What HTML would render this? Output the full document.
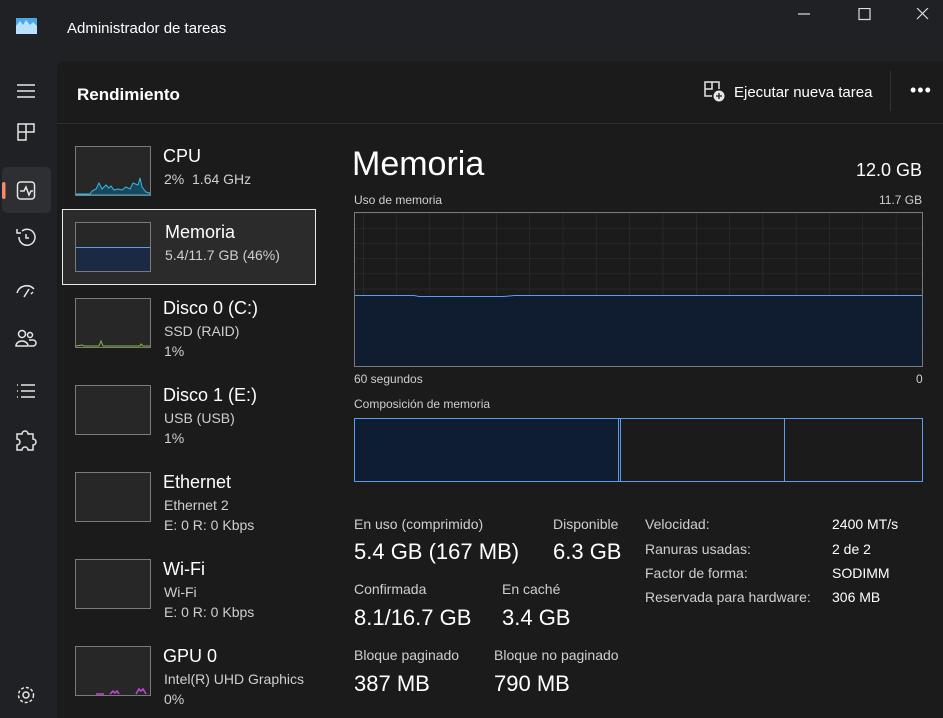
<!DOCTYPE html>
<html><head><meta charset="utf-8"><style>
*{margin:0;padding:0;box-sizing:border-box}
body{width:943px;height:718px;background:#1f2125;font-family:"Segoe UI","Liberation Sans",sans-serif;color:#fff;position:relative;overflow:hidden}
.a{position:absolute}
.t{white-space:nowrap}
.content{left:57px;top:61px;width:886px;height:657px;background:#1b1b1b;border-top-left-radius:8px}
.thumb{position:absolute;left:75px;width:76px;height:50px;background:#272727;border:1px solid #7a7a7a}
.nt{position:absolute;left:163px;font-size:18px;color:#fff}
.ns{position:absolute;left:164px;font-size:14px;color:#cfcfcf}
.lbl{font-size:14px;color:#cfcfcf;position:absolute;white-space:nowrap}
.val{font-size:22px;color:#fff;position:absolute;white-space:nowrap}
.ic{stroke:#e6e6e6;fill:none;stroke-width:1.5}
</style></head><body>
<svg class="a" style="left:16px;top:18px" width="21" height="16"><rect width="21" height="16" fill="#4aa8e8"/><path d="M0 8 L4 3 L7 7 L10 2 L14 7 L17 4 L21 8 V16 H0Z" fill="#b8e2fb"/></svg>
<div class="a t" style="left:67px;top:20px;font-size:15px;color:#fff">Administrador de tareas</div>
<svg class="a" style="left:790px;top:8px" width="150" height="20"><path d="M8 6H20" stroke="#ddd" stroke-width="1.2"/><rect x="69" y="0.5" width="11" height="11" stroke="#ddd" fill="none" stroke-width="1.2"/><path d="M127 0 L138 11 M138 0 L127 11" stroke="#ddd" stroke-width="1.2"/></svg>

<svg class="a" style="left:0;top:75px" width="57" height="640">
<path class="ic" d="M17 10H35M17 16H35M17 22H35"/>
<path class="ic" d="M18 57h8v-8h-8zM26 57h8v-8h-8zM18 57v8h8v-8"/>
<rect x="2" y="92" width="49" height="46" rx="5" fill="#2d2f33"/>
<rect x="2" y="107" width="3.5" height="17" rx="2" fill="#f28c6c"/>
<rect x="17.5" y="107" width="17" height="17" rx="3" class="ic"/>
<path class="ic" d="M20 116h4l2-4 3 8 2-4h2"/>
<path class="ic" d="M19 162a8 8 0 1 0 3-6M17 154v4h4M26 159v4h3"/>
<path class="ic" d="M17 218a10 10 0 0 1 17-4M24 222l5-8M31 219l2-2"/>
<circle class="ic" cx="22" cy="259" r="3.5"/><circle class="ic" cx="30" cy="260" r="2.5"/><path class="ic" d="M16 271a6 5 0 0 1 12 0zM29 265h4a3 3 0 0 1 0 6h-4"/>
<path class="ic" d="M21 310h14M21 316h14M21 322h14M17 310h1M17 316h1M17 322h1"/>
<path class="ic" d="M22 359a3 3 0 0 1 6 0h5v5a3 3 0 0 1 0 6v5h-5a3 3 0 0 0-6 0h-5v-5a3 3 0 0 0 0-6v-5z"/>
<circle class="ic" cx="26" cy="620" r="3"/><circle class="ic" cx="26" cy="620" r="7.5" stroke-dasharray="3 2"/>
</svg>

<div class="a content"></div>
<div class="a t" style="left:77px;top:85px;font-size:17px;font-weight:bold">Rendimiento</div>
<div class="a" style="left:57px;top:123px;width:886px;height:1px;background:#2e2e2e"></div>
<svg class="a" style="left:704px;top:81px" width="22" height="22"><path class="ic" d="M1 1h7v7H1zM8 1h7v7M1 8v7h7" stroke-width="1.3"/><circle cx="15" cy="15" r="5.5" fill="#e6e6e6"/><path d="M15 12v6M12 15h6" stroke="#1b1b1b" stroke-width="1.3"/></svg>
<div class="a t" style="left:734px;top:84px;font-size:15px">Ejecutar nueva tarea</div>
<div class="a" style="left:890px;top:71px;width:1px;height:40px;background:#333"></div>
<div class="a t" style="left:910px;top:80px;font-size:18px;letter-spacing:1px">•••</div>

<div class="a" style="left:62px;top:209px;width:254px;height:76px;background:#2b2b2b;border:1px solid #e8e8e8"></div>
<div class="thumb" style="top:146px"><svg width="74" height="48" style="position:absolute;left:0;top:0"><path d="M0 47 L14 47 L16 44 L20 42 L23 36 L26 42 L30 38 L33 41 L35 39 L38 43 L42 42 L46 43 L50 40 L54 42 L57 36 L62 38 L64 31 L66 40 L70 45 L74 46 V48 H0Z" fill="#16495e" stroke="#3ab7e0" stroke-width="1"/></svg></div>
<div class="nt" style="top:146px">CPU</div><div class="ns" style="top:171px">2%&nbsp; 1.64 GHz</div>
<div class="thumb" style="top:222px"><div style="position:absolute;left:0;right:0;bottom:0;height:24px;background:#1b2a44;border-top:1px solid #5d9ded"></div></div>
<div class="nt" style="top:222px;left:165px">Memoria</div><div class="ns" style="top:247px;left:165px">5.4/11.7 GB (46%)</div>
<div class="thumb" style="top:298px"><svg width="74" height="48" style="position:absolute"><path d="M0 47L6 46L8 47L23 47L25 42L27 47L64 47L65 45L67 47L74 47" stroke="#7fbf3a" fill="none"/></svg></div>
<div class="nt" style="top:298px">Disco 0 (C:)</div><div class="ns" style="top:323px">SSD (RAID)</div><div class="ns" style="top:343px">1%</div>
<div class="thumb" style="top:385px"></div>
<div class="nt" style="top:385px">Disco 1 (E:)</div><div class="ns" style="top:410px">USB (USB)</div><div class="ns" style="top:430px">1%</div>
<div class="thumb" style="top:472px"></div>
<div class="nt" style="top:472px">Ethernet</div><div class="ns" style="top:497px">Ethernet 2</div><div class="ns" style="top:517px">E: 0 R: 0 Kbps</div>
<div class="thumb" style="top:559px"></div>
<div class="nt" style="top:559px">Wi-Fi</div><div class="ns" style="top:584px">Wi-Fi</div><div class="ns" style="top:604px">E: 0 R: 0 Kbps</div>
<div class="thumb" style="top:646px"><svg width="74" height="48" style="position:absolute"><path d="M20 47h8M34 47l3-3 2 2 2-2 2 3M60 47l3-5 2 2 2-2 3 5" stroke="#c04ad8" fill="none" stroke-width="1.5"/></svg></div>
<div class="nt" style="top:646px">GPU 0</div><div class="ns" style="top:671px">Intel(R) UHD Graphics</div><div class="ns" style="top:691px">0%</div>

<div class="a t" style="left:352px;top:145px;font-size:34px">Memoria</div>
<div class="a t" style="left:856px;top:160px;font-size:18px">12.0 GB</div>
<div class="lbl" style="left:354px;top:193px;font-size:12px">Uso de memoria</div>
<div class="lbl" style="left:879px;top:193px;font-size:12px">11.7 GB</div>
<svg class="a" style="left:354px;top:212px" width="569" height="155">
<defs><pattern id="g" x="9" y="16" width="33.3" height="15.2" patternUnits="userSpaceOnUse"><path d="M0 0V16M0 0H34" stroke="#323232" stroke-width="1" fill="none"/></pattern></defs>
<rect width="569" height="155" fill="#1b1b1b"/><rect width="569" height="155" fill="url(#g)"/>
<rect x="0.5" y="83" width="568" height="71.5" fill="#0f1d33" fill-opacity=".93"/>
<path d="M0.5 83.5H60L65 84.5H150L160 83.5H568" stroke="#5d9ded" fill="none"/>
<rect x="0.5" y="0.5" width="568" height="154" fill="none" stroke="#7a7a7a"/>
</svg>
<div class="lbl" style="left:354px;top:372px;font-size:12px">60 segundos</div>
<div class="lbl" style="left:916px;top:372px;font-size:12px">0</div>
<div class="lbl" style="left:354px;top:397px;font-size:12px">Composición de memoria</div>
<svg class="a" style="left:354px;top:418px" width="569" height="65">
<rect x="0.5" y="0.5" width="264" height="63" fill="#0f1d33"/>
<rect x="0.5" y="0.5" width="568" height="63" fill="none" stroke="#5d9ded"/>
<path d="M264.5 0V64M266.5 0V64M430.5 0V64" stroke="#5d9ded"/>
</svg>

<div class="lbl" style="left:354px;top:516px">En uso (comprimido)</div>
<div class="val" style="left:354px;top:539px">5.4 GB (167 MB)</div>
<div class="lbl" style="left:553px;top:516px">Disponible</div>
<div class="val" style="left:553px;top:539px">6.3 GB</div>
<div class="lbl" style="left:354px;top:581px">Confirmada</div>
<div class="val" style="left:354px;top:605px">8.1/16.7 GB</div>
<div class="lbl" style="left:502px;top:581px">En caché</div>
<div class="val" style="left:502px;top:605px">3.4 GB</div>
<div class="lbl" style="left:354px;top:647px">Bloque paginado</div>
<div class="val" style="left:354px;top:671px">387 MB</div>
<div class="lbl" style="left:494px;top:647px">Bloque no paginado</div>
<div class="val" style="left:494px;top:671px">790 MB</div>

<div class="lbl" style="left:645px;top:516px">Velocidad:</div><div class="lbl" style="left:832px;top:516px;color:#fff">2400 MT/s</div>
<div class="lbl" style="left:645px;top:541px">Ranuras usadas:</div><div class="lbl" style="left:832px;top:541px;color:#fff">2 de 2</div>
<div class="lbl" style="left:645px;top:565px">Factor de forma:</div><div class="lbl" style="left:832px;top:565px;color:#fff">SODIMM</div>
<div class="lbl" style="left:645px;top:589px">Reservada para hardware:</div><div class="lbl" style="left:832px;top:589px;color:#fff">306 MB</div>
</body></html>
